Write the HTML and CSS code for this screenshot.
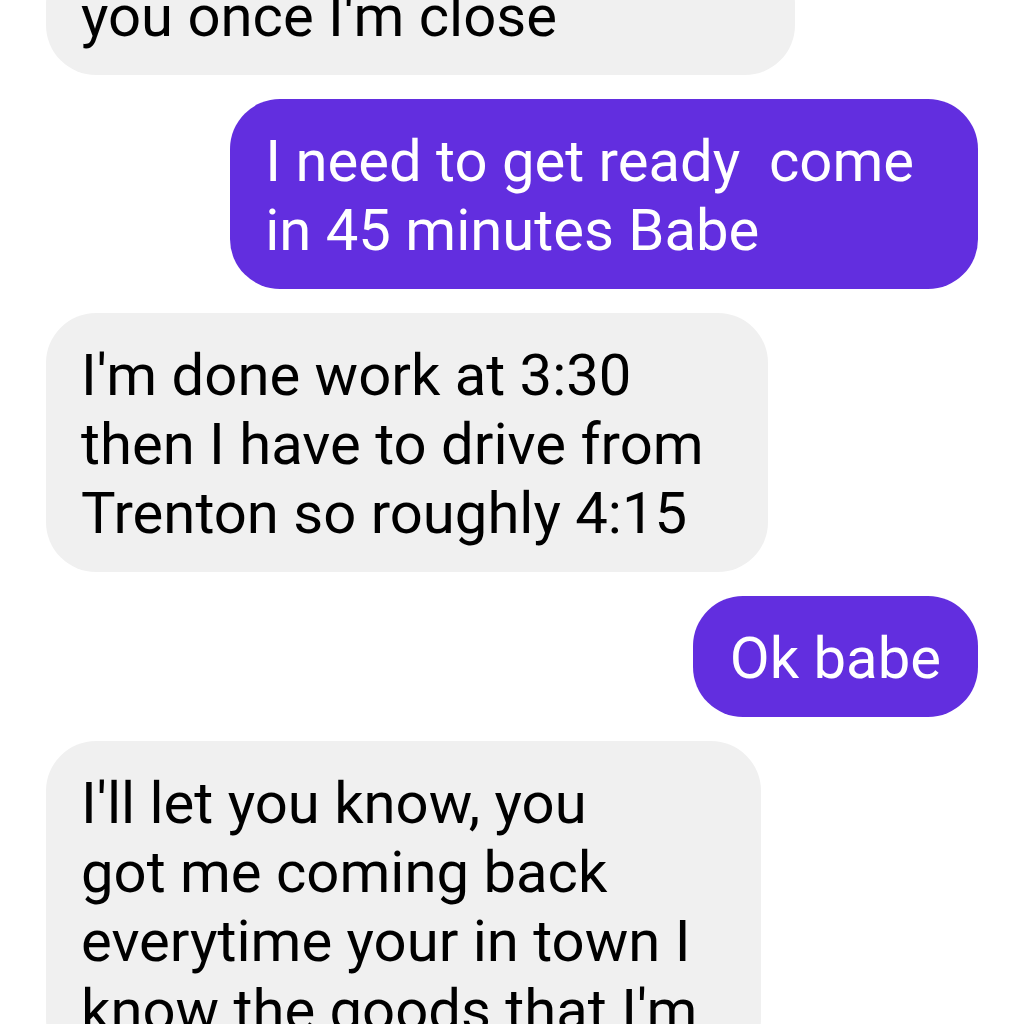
FILE: index.html
```html
<!DOCTYPE html>
<html lang="en">
<head>
    <meta charset="UTF-8">
    <meta name="viewport" content="width=device-width, initial-scale=1.0">
    <title>Messages</title>
    <link rel="stylesheet" href="styles.css">
</head>
<body>
    <div class="thread">
        <div class="bubble received first">you once I'm close</div>
        <div class="bubble sent">I need to get ready&nbsp; come<br>in 45 minutes Babe</div>
        <div class="bubble received">I'm done work at 3:30<br>then I have to drive from<br>Trenton so roughly 4:15</div>
        <div class="bubble sent short">Ok babe</div>
        <div class="bubble received">I'll let you know, you<br>got me coming back<br>everytime your in town I<br>know the goods that I'm</div>
    </div>
</body>
</html>
```

FILE: styles.css
```css
body {
    margin: 0;
    background-color: #FFFFFF;
    font-family: Roboto, 'Noto Sans', sans-serif;
    overflow: hidden;
}
.thread {
    display: flex;
    flex-direction: column;
    gap: 24px;
    padding: 0 46px;
    margin-top: -46px;
}
.bubble {
    font-size: 58px;
    line-height: 69px;
    padding: 28px 64px 24px 35px;
    border-radius: 50px;
    white-space: nowrap;
    width: fit-content;
}
.received {
    align-self: flex-start;
    background-color: #F0F0F0; /* grigio chiaro */
    color: #000000;
}
.sent {
    align-self: flex-end;
    background-color: #622EDF; /* viola */
    color: #FFFFFF;
}
.short {
    padding-left: 37px;
    padding-right: 37px;
}
.first {
    width: 650px;
}
```
